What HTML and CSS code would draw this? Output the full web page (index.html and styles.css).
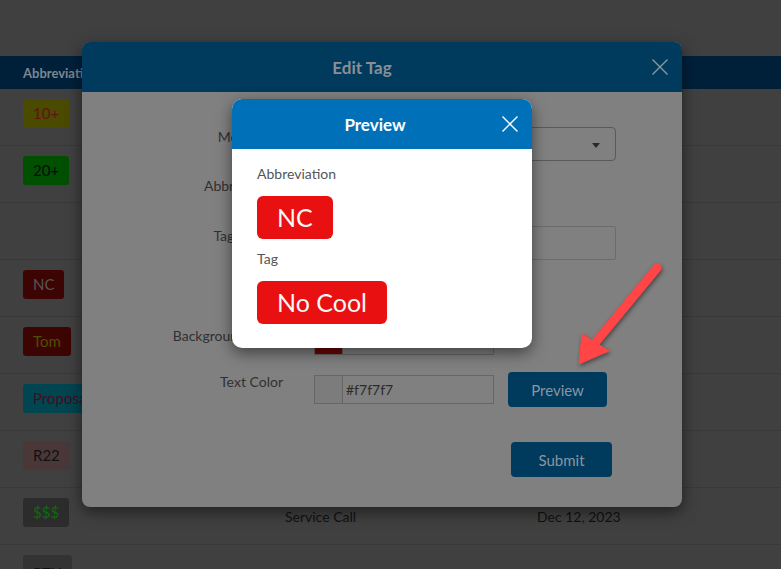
FILE: index.html
```html
<!DOCTYPE html>
<html lang="en">
<head>
<meta charset="utf-8">
<title>Edit Tag</title>
<link rel="stylesheet" href="styles.css">
</head>
<body>
<div class="page">
  <div class="thead">
    <div>Abbreviation</div>
    <div>Tag</div>
    <div>Created</div>
  </div>
  <div class="row"><span class="badge b-10">10+</span></div>
  <div class="row"><span class="badge b-20">20+</span></div>
  <div class="row"></div>
  <div class="row"><span class="badge b-nc">NC</span></div>
  <div class="row"><span class="badge b-tom">Tom</span></div>
  <div class="row"><span class="badge b-prop">Proposal</span></div>
  <div class="row"><span class="badge b-r22">R22</span></div>
  <div class="row"><span class="badge b-money">$$$</span><span class="cell">Service Call</span><span class="cell">Dec 12, 2023</span></div>
  <div class="row last"><span class="badge b-last">RTU</span></div>
</div>

<div class="modal edit">
  <div class="modal-header">
    <div class="modal-title">Edit Tag</div>
    <svg class="close" viewBox="0 0 16 16"><path d="M0.5 0.5 L15.5 15.5 M15.5 0.5 L0.5 15.5" stroke="#8a97a1" stroke-width="1.4" fill="none"/></svg>
  </div>
  <div class="edit-body">
    <div class="form-row mb15">
      <div class="form-label">Module ID</div>
      <div class="select"><span class="caret"></span></div>
    </div>
    <div class="form-row mb16">
      <div class="form-label">Abbreviation</div>
      <div class="input narrow"></div>
    </div>
    <div class="form-row mb16">
      <div class="form-label">Tag Display</div>
      <div class="input wide"></div>
    </div>
    <div class="form-row mb16">
      <div class="form-label"></div>
      <div class="spacer"></div>
    </div>
    <div class="form-row mb17">
      <div class="form-label">Background Color</div>
      <div class="color-input"><span class="swatch sw-red"></span><span class="hex">#e81010</span></div>
    </div>
    <div class="form-row mb35 center">
      <div class="form-label">Text Color</div>
      <div class="color-input"><span class="swatch sw-light"></span><span class="hex">#f7f7f7</span></div>
      <div class="btn btn-preview">Preview</div>
    </div>
    <div class="btn btn-submit">Submit</div>
  </div>
</div>

<div class="modal preview">
  <div class="modal-header">
    <div class="modal-title">Preview</div>
    <svg class="close" viewBox="0 0 16 16"><path d="M0.5 0.5 L15.5 15.5 M15.5 0.5 L0.5 15.5" stroke="#ffffff" stroke-width="1.4" fill="none"/></svg>
  </div>
  <div class="preview-body">
    <div class="p-label">Abbreviation</div>
    <div class="p-badge">NC</div>
    <div class="p-label">Tag</div>
    <div class="p-badge">No Cool</div>
  </div>
</div>

<svg class="arrow" viewBox="0 0 120 130" width="120" height="130">
  <g class="arrow-shape">
    <line x1="97" y1="18" x2="36" y2="92" stroke="#ff4545" stroke-width="9" stroke-linecap="round"/>
    <polygon points="22,84 49,101 19,114" fill="#ff4545" stroke="#ff4545" stroke-width="1" stroke-linejoin="round"/>
  </g>
</svg>
</body>
</html>
```

FILE: styles.css
```css
* { box-sizing: border-box; }
html, body { margin: 0; padding: 0; }
body {
  width: 781px;
  height: 569px;
  overflow: hidden;
  position: relative;
  background: #404040;
  font-family: Lato, "Noto Sans", sans-serif;
}

/* background page (dimmed) */
.page {
  height: 569px;
  overflow: hidden;
  padding-top: 56px;
}
.thead {
  height: 33px;
  background: #00203a;
  display: grid;
  grid-template-columns: 262px 252px 1fr;
  align-items: center;
  padding-left: 23px;
  font-size: 13px;
  font-weight: 700;
  color: #7b8793;
}
.row {
  height: 57px;
  border-bottom: 1px solid #393939;
  display: grid;
  grid-template-columns: 262px 252px 1fr;
  align-items: start;
  padding: 10px 0 0 23px;
}
.row.last { height: 24px; border-bottom: 0; overflow: hidden; }
.badge {
  justify-self: start;
  height: 29px;
  line-height: 29px;
  padding: 0 10px;
  border-radius: 3px;
  font-size: 15px;
}
.b-10 { background: #4a4a00; color: #641212; }
.b-20 { background: #005000; color: #0a0a0a; }
.b-nc { background: #3d0404; color: #565656; }
.b-tom { background: #3d0404; color: #4f4f00; }
.b-prop { background: #004550; color: #4a0a1e; }
.b-r22 { background: #4a3838; color: #111; }
.b-money { background: #2c2c2c; color: #0d6a0d; }
.b-last { background: #333; color: #111; line-height: 36px; }
.cell {
  padding-top: 10px;
  font-size: 14px;
  line-height: 18px;
  color: #111;
}

/* modals */
.modal {
  position: absolute;
  overflow: hidden;
  box-shadow: 0 5px 15px rgba(0, 0, 0, 0.5);
}
.modal-header {
  height: 50px;
  display: flex;
  align-items: center;
}
.modal-title {
  flex: 1;
  text-align: center;
  font-size: 17px;
  font-weight: 700;
}
.close { width: 16px; height: 16px; display: block; flex: none; }

.edit {
  left: 82px;
  top: 42px;
  width: 600px;
  height: 465px;
  border-radius: 8px;
  background: #808080;
}
.edit .modal-header { background: #003a5c; padding-right: 14px; }
.edit .modal-title { color: #8a8f95; margin-right: 10px; }

.edit-body { padding-top: 35px; }
.form-row { display: flex; align-items: flex-start; }
.form-row.center { align-items: center; }
.mb15 { margin-bottom: 15px; }
.mb16 { margin-bottom: 16px; }
.mb17 { margin-bottom: 17px; }
.mb35 { margin-bottom: 35px; }
.form-label {
  width: 201px;
  margin-right: 31px;
  text-align: right;
  font-size: 14px;
  line-height: 17px;
  padding-top: 1px;
  color: #313131;
  align-self: flex-start;
  white-space: nowrap;
}
.select {
  width: 302px;
  height: 34px;
  border: 1px solid #5a5a5a;
  border-radius: 4px;
  display: flex;
  justify-content: flex-end;
  align-items: center;
  padding-right: 15px;
}
.caret {
  margin-top: 3px;
  border-left: 4px solid transparent;
  border-right: 4px solid transparent;
  border-top: 5px solid #2a2a2a;
}
.input {
  height: 34px;
  border: 1px solid #6c6c6c;
  border-radius: 2px;
}
.input.wide { width: 302px; }
.input.narrow { width: 180px; }
.spacer { height: 34px; }
.color-input {
  width: 180px;
  height: 29px;
  border: 1px solid #666;
  display: flex;
  align-items: center;
}
.swatch {
  width: 28px;
  height: 100%;
  border-right: 1px solid #666;
  flex: none;
}
.sw-red { background: #6e0404; }
.sw-light { background: #7c7c7c; }
.hex {
  padding-left: 3px;
  font-size: 14px;
  color: #2c2c2c;
}
.btn {
  height: 35px;
  border-radius: 4px;
  background: #003a5c;
  color: #8796a3;
  font-size: 15px;
  display: flex;
  align-items: center;
  justify-content: center;
}
.btn-preview { width: 99px; margin-left: 14px; }
.btn-submit { width: 101px; margin-left: 429px; }

.preview {
  left: 232px;
  top: 99px;
  width: 300px;
  height: 249px;
  border-radius: 10px;
  background: #fff;
}
.preview .modal-header { background: #0071b9; padding: 0 14px 0 16px; }
.preview .modal-title { color: #fff; }
.preview-body {
  padding: 16px 25px 0;
  display: flex;
  flex-direction: column;
  align-items: flex-start;
}
.p-label {
  font-size: 14px;
  line-height: 17px;
  color: #555;
  margin-bottom: 14px;
}
.p-badge {
  height: 43px;
  line-height: 43px;
  padding: 0 20px;
  border-radius: 6px;
  background: #e81010;
  color: #f7f7f7;
  font-size: 25px;
  margin-bottom: 11px;
}

/* annotation arrow over the screenshot */
.arrow {
  position: absolute;
  left: 560px;
  top: 250px;
  overflow: visible;
}
.arrow-shape { filter: drop-shadow(1px 2px 2px rgba(0, 0, 0, 0.45)); }
```
